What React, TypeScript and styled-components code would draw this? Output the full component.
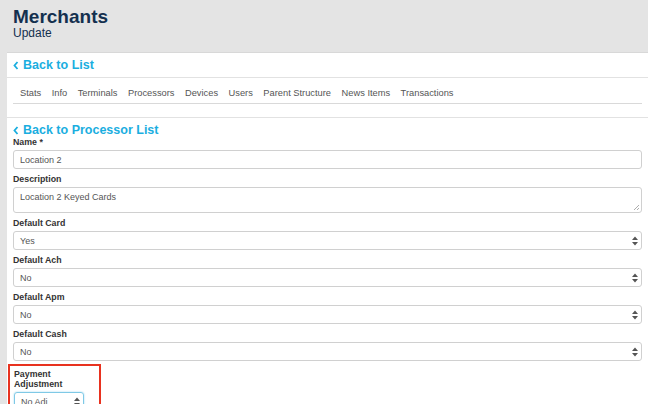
import React from "react";
import styled, { createGlobalStyle } from "styled-components";

const Global = createGlobalStyle`
  html, body { margin: 0; padding: 0; background: #e4e4e4; font-family: "Liberation Sans", Arial, sans-serif; overflow: hidden; }
`;

const Page = styled.div`width: 648px; height: 404px; overflow: hidden;`;
const Header = styled.div`padding: 7px 13px 0; height: 45px; box-sizing: border-box;`;
const Title = styled.div`font-size: 19px; font-weight: bold; color: #14304f; line-height: 20px;`;
const Sub = styled.div`font-size: 12px; color: #14304f; line-height: 13px;`;
const Card = styled.div`margin: 7px 0 0 7px; background: #fff; border-top: 1px solid #d8d8d8; height: 400px;`;
const BackRow = styled.div`height: 24px; display: flex; align-items: center; padding-left: 6px; border-bottom: 1px solid #e2e2e2;`;
const Back = styled.a<{ $top?: number }>`font-size: 12.5px; font-weight: bold; color: #1aaedf; display: flex; align-items: center; gap: 4px; line-height: 14px; margin-top: ${p => p.$top ?? 0}px;`;
const TabSection = styled.div`padding: 0 6px; height: 39px; border-bottom: 1px solid #e2e2e2;`;
const Tabs = styled.div`display: flex; height: 26px; border-bottom: 1px solid #d9d9d9; align-items: flex-end; padding-bottom: 5px; box-sizing: border-box; padding-left: 7px;`;
const Tab = styled.span`font-size: 9.3px; color: #555; margin-right: 10.5px;`;
const Form = styled.div`padding: 5px 6px 0;`;
const Label = styled.div<{ $top?: number }>`font-size: 8.8px; font-weight: bold; color: #333; margin-top: ${p => p.$top ?? 5}px; margin-bottom: 3px; line-height: 10px;`;
const Input = styled.div<{ $h?: number; $w?: number; $focus?: boolean }>`
  height: ${p => p.$h ?? 19}px; box-sizing: border-box;
  width: ${p => (p.$w ? p.$w + "px" : "auto")};
  border: 1px solid ${p => (p.$focus ? "#7fc9e6" : "#d0d0d0")}; border-radius: 3px;
  box-shadow: ${p => (p.$focus ? "0 0 2px #9ad6ee" : "none")};
  font-size: 9px; color: #555; padding: 0 6px; position: relative;
  display: flex; align-items: ${p => (p.$h ? "flex-start" : "center")};
  padding-top: ${p => (p.$h ? "4px" : "0")};
`;
const Arrows = styled.svg`position: absolute; right: 3px; top: 50%; transform: translateY(-50%);`;
const Grip = styled.svg`position: absolute; right: 1px; bottom: 1px;`;
const Highlight = styled.div`border: 2px solid #e8321f; width: 93px; margin-left: -5px; padding: 0 0 2px 4px; margin-top: 3px; box-sizing: border-box;`;

const Chev = () => (
  <svg width="6" height="9" viewBox="0 0 6 9"><path d="M4.5 1 L1.5 4.5 L4.5 8" stroke="#1aaedf" strokeWidth="1.8" fill="none" /></svg>
);
const Sel = () => (
  <Arrows width="6" height="10" viewBox="0 0 6 10"><path d="M0 4 L3 0.5 L6 4Z M0 6 L3 9.5 L6 6Z" fill="#555" /></Arrows>
);

const tabs = ["Stats", "Info", "Terminals", "Processors", "Devices", "Users", "Parent Structure", "News Items", "Transactions"];
const selects: [string, string][] = [["Default Card", "Yes"], ["Default Ach", "No"], ["Default Apm", "No"], ["Default Cash", "No"]];

export default function App() {
  return (
    <Page>
      <Global />
      <Header><Title>Merchants</Title><Sub>Update</Sub></Header>
      <Card>
        <BackRow><Back><Chev />Back to List</Back></BackRow>
        <TabSection><Tabs>{tabs.map(t => <Tab key={t}>{t}</Tab>)}</Tabs></TabSection>
        <Form>
          <Back><Chev />Back to Processor List</Back>
          <Label $top={0}>Name *</Label>
          <Input>Location 2</Input>
          <Label>Description</Label>
          <Input $h={26}>Location 2 Keyed Cards
            <Grip width="7" height="7" viewBox="0 0 7 7"><path d="M6 1 L1 6 M6 4 L4 6" stroke="#999" strokeWidth="0.8" /></Grip>
          </Input>
          {selects.map(([l, v]) => (
            <React.Fragment key={l}>
              <Label>{l}</Label>
              <Input>{v}<Sel /></Input>
            </React.Fragment>
          ))}
          <Highlight>
            <Label $top={3}>Payment Adjustment</Label>
            <Input $w={70} $focus>No Adj<Sel /></Input>
          </Highlight>
        </Form>
      </Card>
    </Page>
  );
}
